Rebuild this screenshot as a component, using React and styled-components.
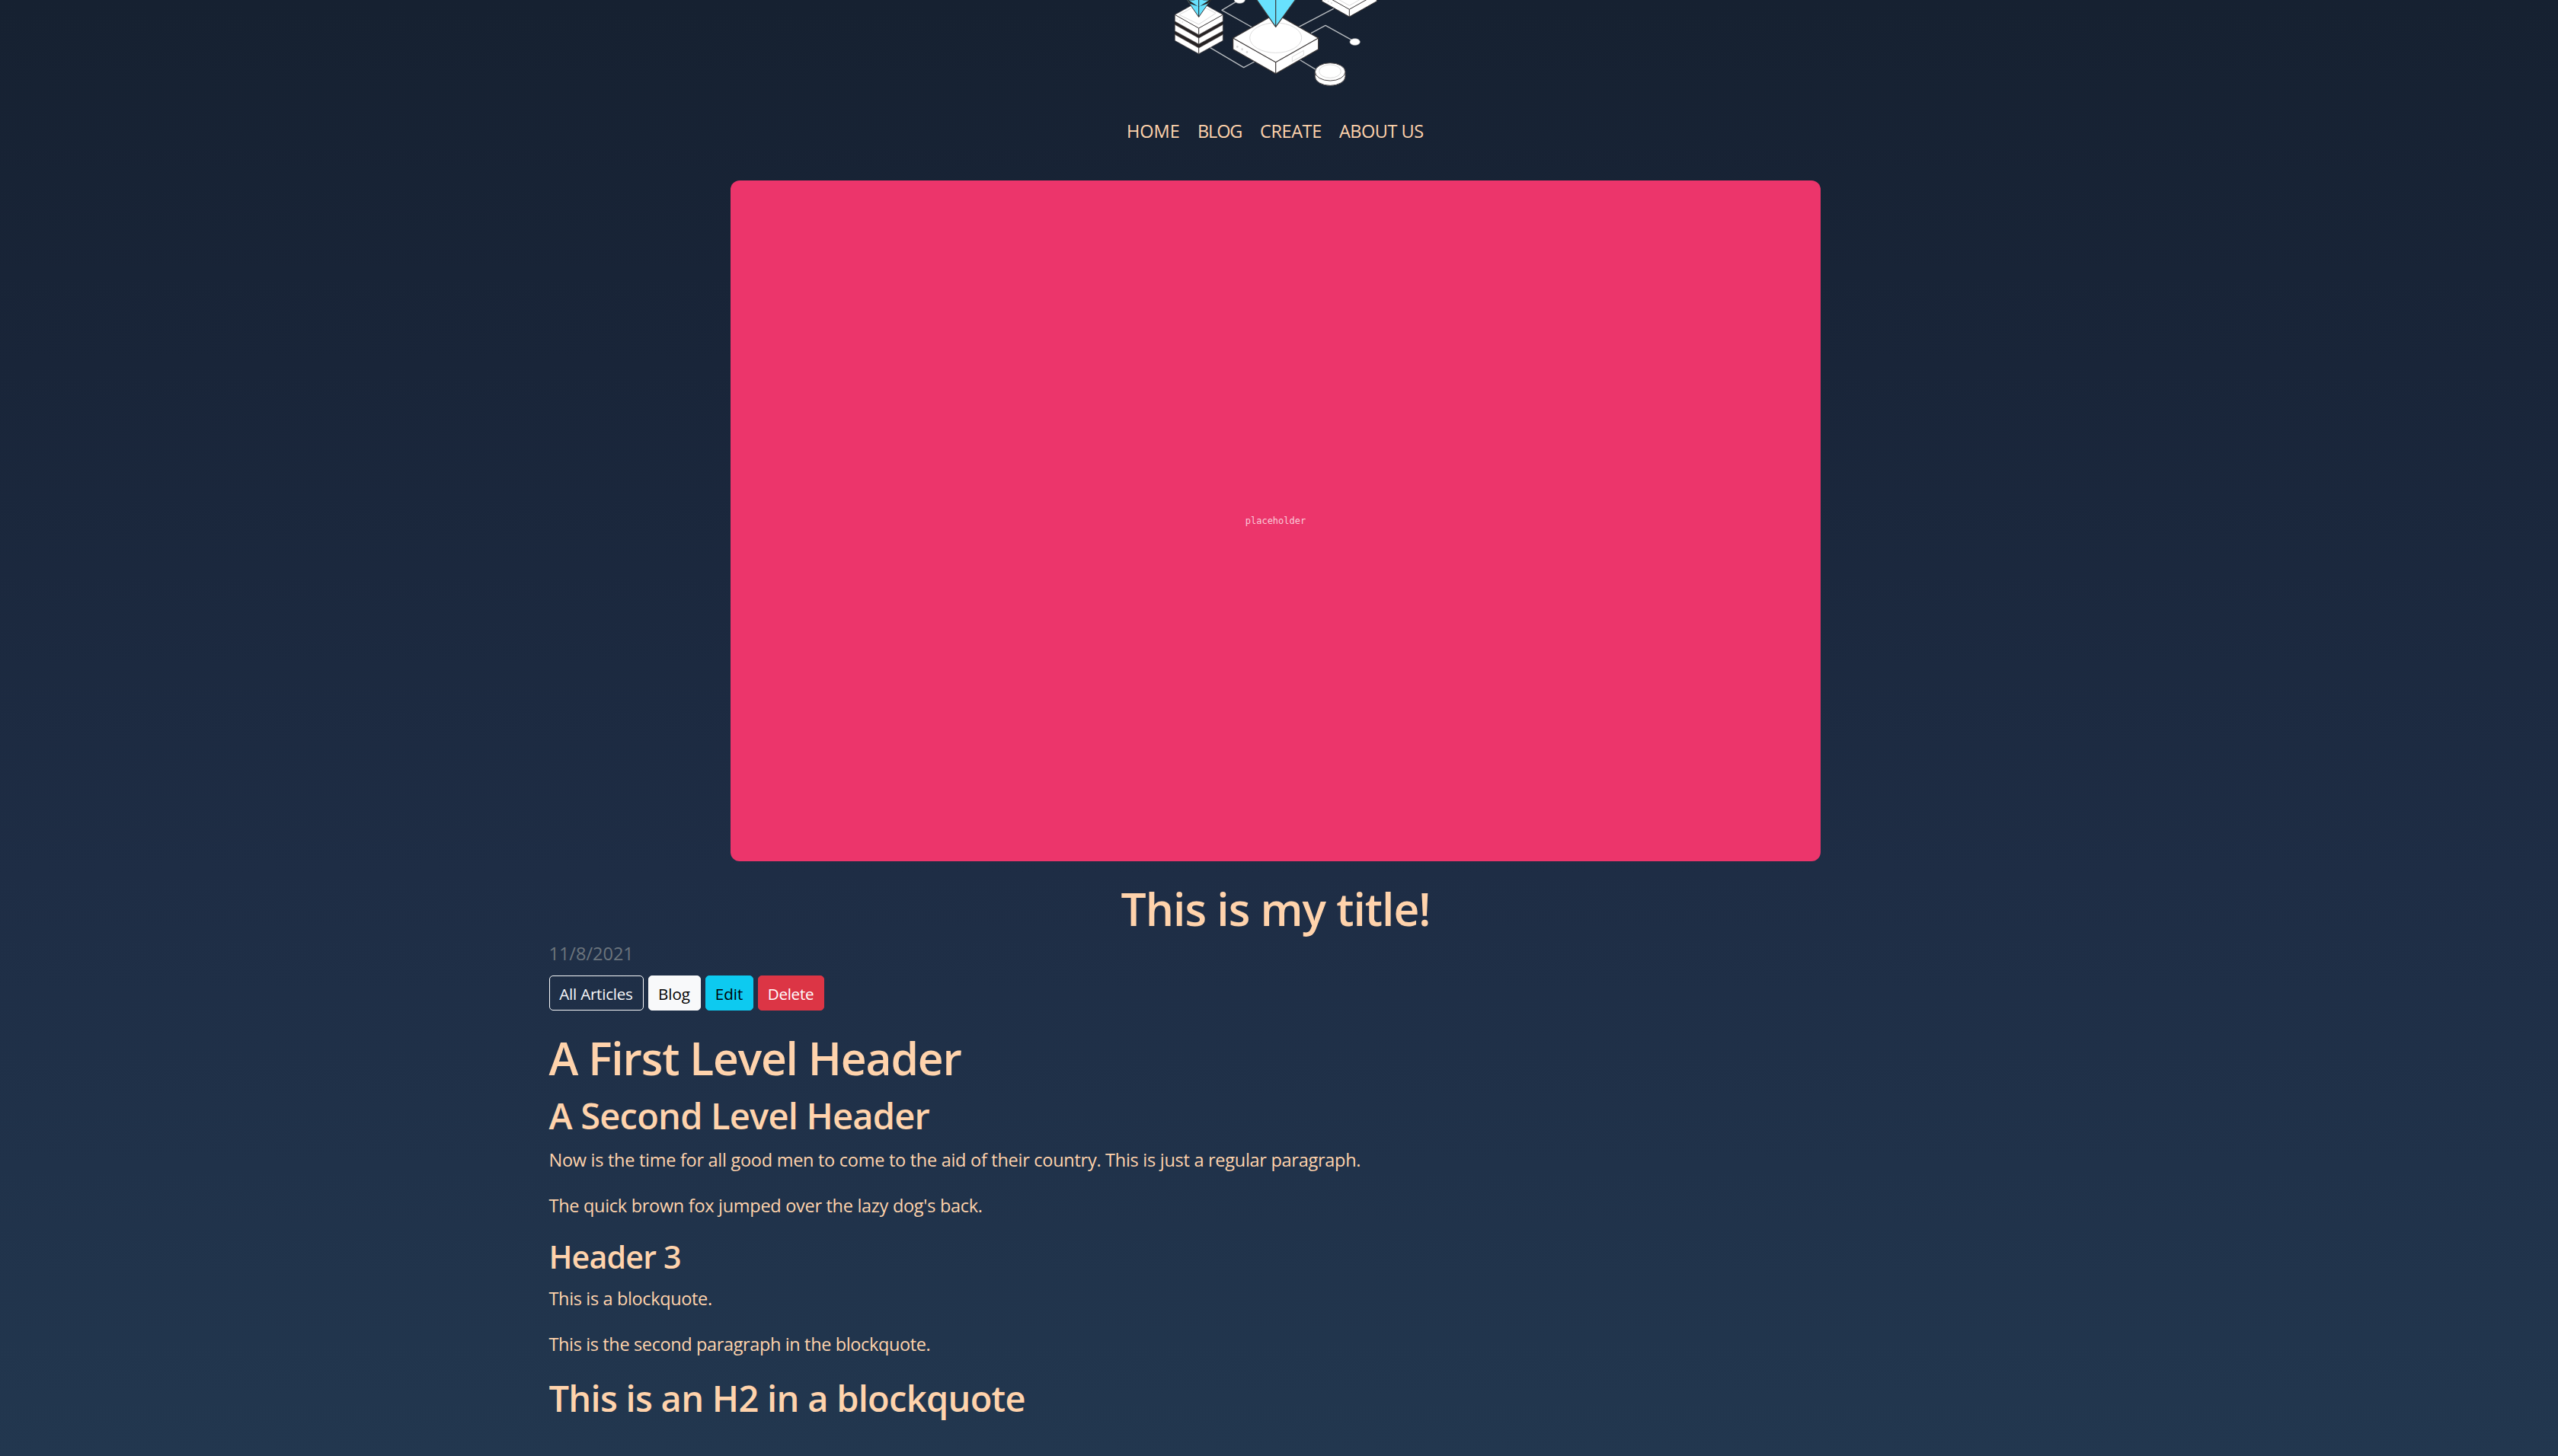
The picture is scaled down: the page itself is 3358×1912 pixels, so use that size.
import React from "react";
import styled, { createGlobalStyle } from "styled-components";

const GlobalStyle = createGlobalStyle`
  *, *::before, *::after { box-sizing: border-box; }
  html { background: #22374f; }
  body {
    margin: 0;
    height: 1912px;
    overflow: hidden;
    color: #ffd3ac;
    font-family: "Open Sans", "Noto Sans", sans-serif;
    font-size: 23.5px;
    line-height: 36px;
    background: linear-gradient(180deg, #162131 0%, #192539 25%, #1e2d45 60%, #22374f 100%);
  }
`;

const Page = styled.div`
  display: flex;
  flex-direction: column;
  align-items: center;
  width: 3349px;
`;

const Logo = styled.svg`
  display: block;
  width: 309px;
  height: 130px;
`;

const Nav = styled.nav`
  display: flex;
  margin: 24px 0 47px;
`;

const NavLink = styled.a`
  width: ${(p) => p.$width}px;
  color: inherit;
  text-decoration: none;
  white-space: nowrap;
  letter-spacing: ${(p) => p.$tracking || 0}px;
`;

const Article = styled.main`
  display: flex;
  flex-direction: column;
  width: 1908px;
`;

const Cover = styled.div`
  display: flex;
  align-items: center;
  justify-content: center;
  align-self: center;
  width: 1431px;
  height: 894px;
  border-radius: 12px;
  background: #ec356b;
  color: rgba(255, 255, 255, 0.75);
  font: 12px/14px "DejaVu Sans Mono", monospace;
`;

const Heading1 = styled.h1`
  margin: 26px 0 0;
  font-size: 58.8px;
  line-height: 72px;
  font-weight: 600;
  letter-spacing: ${(p) => p.$tracking}px;
  text-align: ${(p) => (p.$centered ? "center" : "left")};
`;

const Heading2 = styled.h2`
  margin: ${(p) => p.$gap}px 0 0;
  font-size: 47px;
  line-height: 58px;
  font-weight: 600;
  letter-spacing: ${(p) => p.$tracking}px;
`;

const Heading3 = styled.h3`
  margin: 24px 0 0;
  font-size: 41.2px;
  line-height: 50px;
  font-weight: 600;
  letter-spacing: -0.85px;
`;

const PostDate = styled.div`
  margin-top: 5px;
  color: #6c757d;
`;

const Actions = styled.div`
  display: flex;
  gap: 6px;
  margin-top: 11px;
`;

const Button = styled.a`
  display: flex;
  align-items: center;
  justify-content: center;
  width: ${(p) => p.$width}px;
  height: 46px;
  padding-top: 2px;
  border: 1px solid ${(p) => p.$border || p.$bg};
  border-radius: 5px;
  background: ${(p) => p.$bg};
  color: ${(p) => p.$color};
  font-size: 20.6px;
  line-height: 30px;
  letter-spacing: ${(p) => p.$tracking || 0}px;
  white-space: nowrap;
`;

const Paragraph = styled.p`
  margin: ${(p) => p.$gap || 24}px 0 0;
  letter-spacing: ${(p) => p.$tracking}px;
`;

function NetworkLogo() {
  return (
    <Logo viewBox="0 0 927 390" strokeLinejoin="round">
      <g fill="none" stroke="#b9bdc1" strokeWidth="4">
        <path d="M306 8L252 40L372 108" />
        <path d="M692 34L555 106" />
        <path d="M603 131L660 100L768 160" />
        <path d="M205 187L338 266L386 240" />
        <path d="M556 234L632 280" />
      </g>
      <ellipse cx="322" cy="0" rx="21" ry="13" fill="#fff" stroke="#bbb" strokeWidth="2" />
      <ellipse cx="776" cy="165" rx="20" ry="13" fill="#fff" stroke="#bbb" strokeWidth="2" />

      <g stroke="#3a3636" strokeWidth="3">
        <path d="M646 -8L646 5L754 66L862 5L862 -8Z" fill="#fff" />
        <path d="M646 -24L754 37L862 -24M754 37V66" fill="none" />
      </g>
      <path d="M694 -12L754 22L814 -12" fill="none" stroke="#ddd" strokeWidth="3" />
      <g fill="#ddd">
        <circle cx="658" cy="0" r="3" />
        <circle cx="671" cy="5" r="3" />
        <circle cx="684" cy="12" r="3" />
      </g>

      <path d="M67 58L161 5L256 58V160L161 212L67 160Z" fill="#262223" />
      <g fill="#fff" stroke="#4a4647" strokeWidth="2">
        <path d="M67 58L161 5L256 58V84L161 137L67 84Z" />
        <path d="M67 97L161 150L256 97V122L161 174L67 122Z" />
        <path d="M67 136L161 189L256 136V160L161 212L67 160Z" />
      </g>
      <path d="M67 58L161 111L256 58M161 111V137M161 150V174M161 189V212" fill="none" stroke="#3a3636" strokeWidth="3" />
      <path d="M84 58L161 17L228 52L161 96Z" fill="none" stroke="#ddd" strokeWidth="3" />
      <g fill="#e4e4e4">
        <circle cx="75" cy="75" r="3" />
        <circle cx="86" cy="81" r="3" />
        <circle cx="97" cy="87" r="3" />
      </g>
      <path d="M115 0H208L161 67Z" fill="#68e1fd" stroke="#3a3636" strokeWidth="3" />
      <path d="M115 -4L161 28L208 -4V2L195 14L161 26L126 14Z" fill="#262223" />
      <path d="M138 -2H184L161 12Z" fill="#68e1fd" />
      <path d="M161 0V67" stroke="#262223" strokeWidth="3" />

      <g stroke="#3a3636" strokeWidth="3.5">
        <path d="M296 150L464 54L632 150V194L464 290L296 194Z" fill="#fff" />
        <path d="M296 150L464 245L632 150M464 245V290" fill="none" />
      </g>
      <ellipse cx="464" cy="149" rx="102" ry="59" fill="none" stroke="#ddd" strokeWidth="3" />
      <g fill="#d8d8d8">
        <ellipse cx="313" cy="184" rx="4" ry="5" />
        <ellipse cx="332" cy="194" rx="4" ry="5" />
        <ellipse cx="351" cy="205" rx="4" ry="5" />
      </g>
      <path d="M529 224L574 199V217L529 242Z" fill="none" stroke="#ddd" strokeWidth="3" />
      <path d="M387 -4H544L464 106Z" fill="#68e1fd" stroke="#3a3636" strokeWidth="3.5" />
      <path d="M464 0V106" stroke="#3a3636" strokeWidth="3.5" />

      <g stroke="#4a4647" strokeWidth="3">
        <path d="M619 283V302A59.500 35 0 0 0 738 302V283Z" fill="#fff" />
        <ellipse cx="678.500" cy="283" rx="59.500" ry="35" fill="#fff" />
      </g>
      <ellipse cx="678" cy="281" rx="43" ry="26" fill="none" stroke="#ddd" strokeWidth="3" />
    </Logo>
  );
}

export default function App() {
  return (
    <>
      <GlobalStyle />
      <Page>
        <NetworkLogo />
        <Nav>
          <NavLink $width={93}>HOME</NavLink>
          <NavLink $width={82} $tracking={-1.15}>BLOG</NavLink>
          <NavLink $width={104} $tracking={-0.4}>CREATE</NavLink>
          <NavLink $width={112} $tracking={-0.5}>ABOUT US</NavLink>
        </Nav>
        <Article>
          <Cover>placeholder</Cover>
          <Heading1 $centered $tracking={-1.03}>This is my title!</Heading1>
          <PostDate>11/8/2021</PostDate>
          <Actions>
            <Button $width={124} $bg="transparent" $border="#f8f9fa" $color="#f8f9fa" $tracking={-0.23}>All Articles</Button>
            <Button $width={69} $bg="#f8f9fa" $color="#000">Blog</Button>
            <Button $width={63} $bg="#0dcaf0" $color="#000">Edit</Button>
            <Button $width={87} $bg="#dc3545" $color="#fff" $tracking={-0.28}>Delete</Button>
          </Actions>
          <Heading1 $tracking={-1.2}>A First Level Header</Heading1>
          <Heading2 $gap={11} $tracking={-0.78}>A Second Level Header</Heading2>
          <Paragraph $gap={11} $tracking={-0.275}>
            Now is the time for all good men to come to the aid of their country. This is just a regular paragraph.
          </Paragraph>
          <Paragraph $tracking={-0.29}>The quick brown fox jumped over the lazy dog's back.</Paragraph>
          <Heading3>Header 3</Heading3>
          <Paragraph $gap={12} $tracking={-0.355}>This is a blockquote.</Paragraph>
          <Paragraph $tracking={-0.37}>This is the second paragraph in the blockquote.</Paragraph>
          <Heading2 $gap={24} $tracking={-0.71}>This is an H2 in a blockquote</Heading2>
        </Article>
      </Page>
    </>
  );
}
